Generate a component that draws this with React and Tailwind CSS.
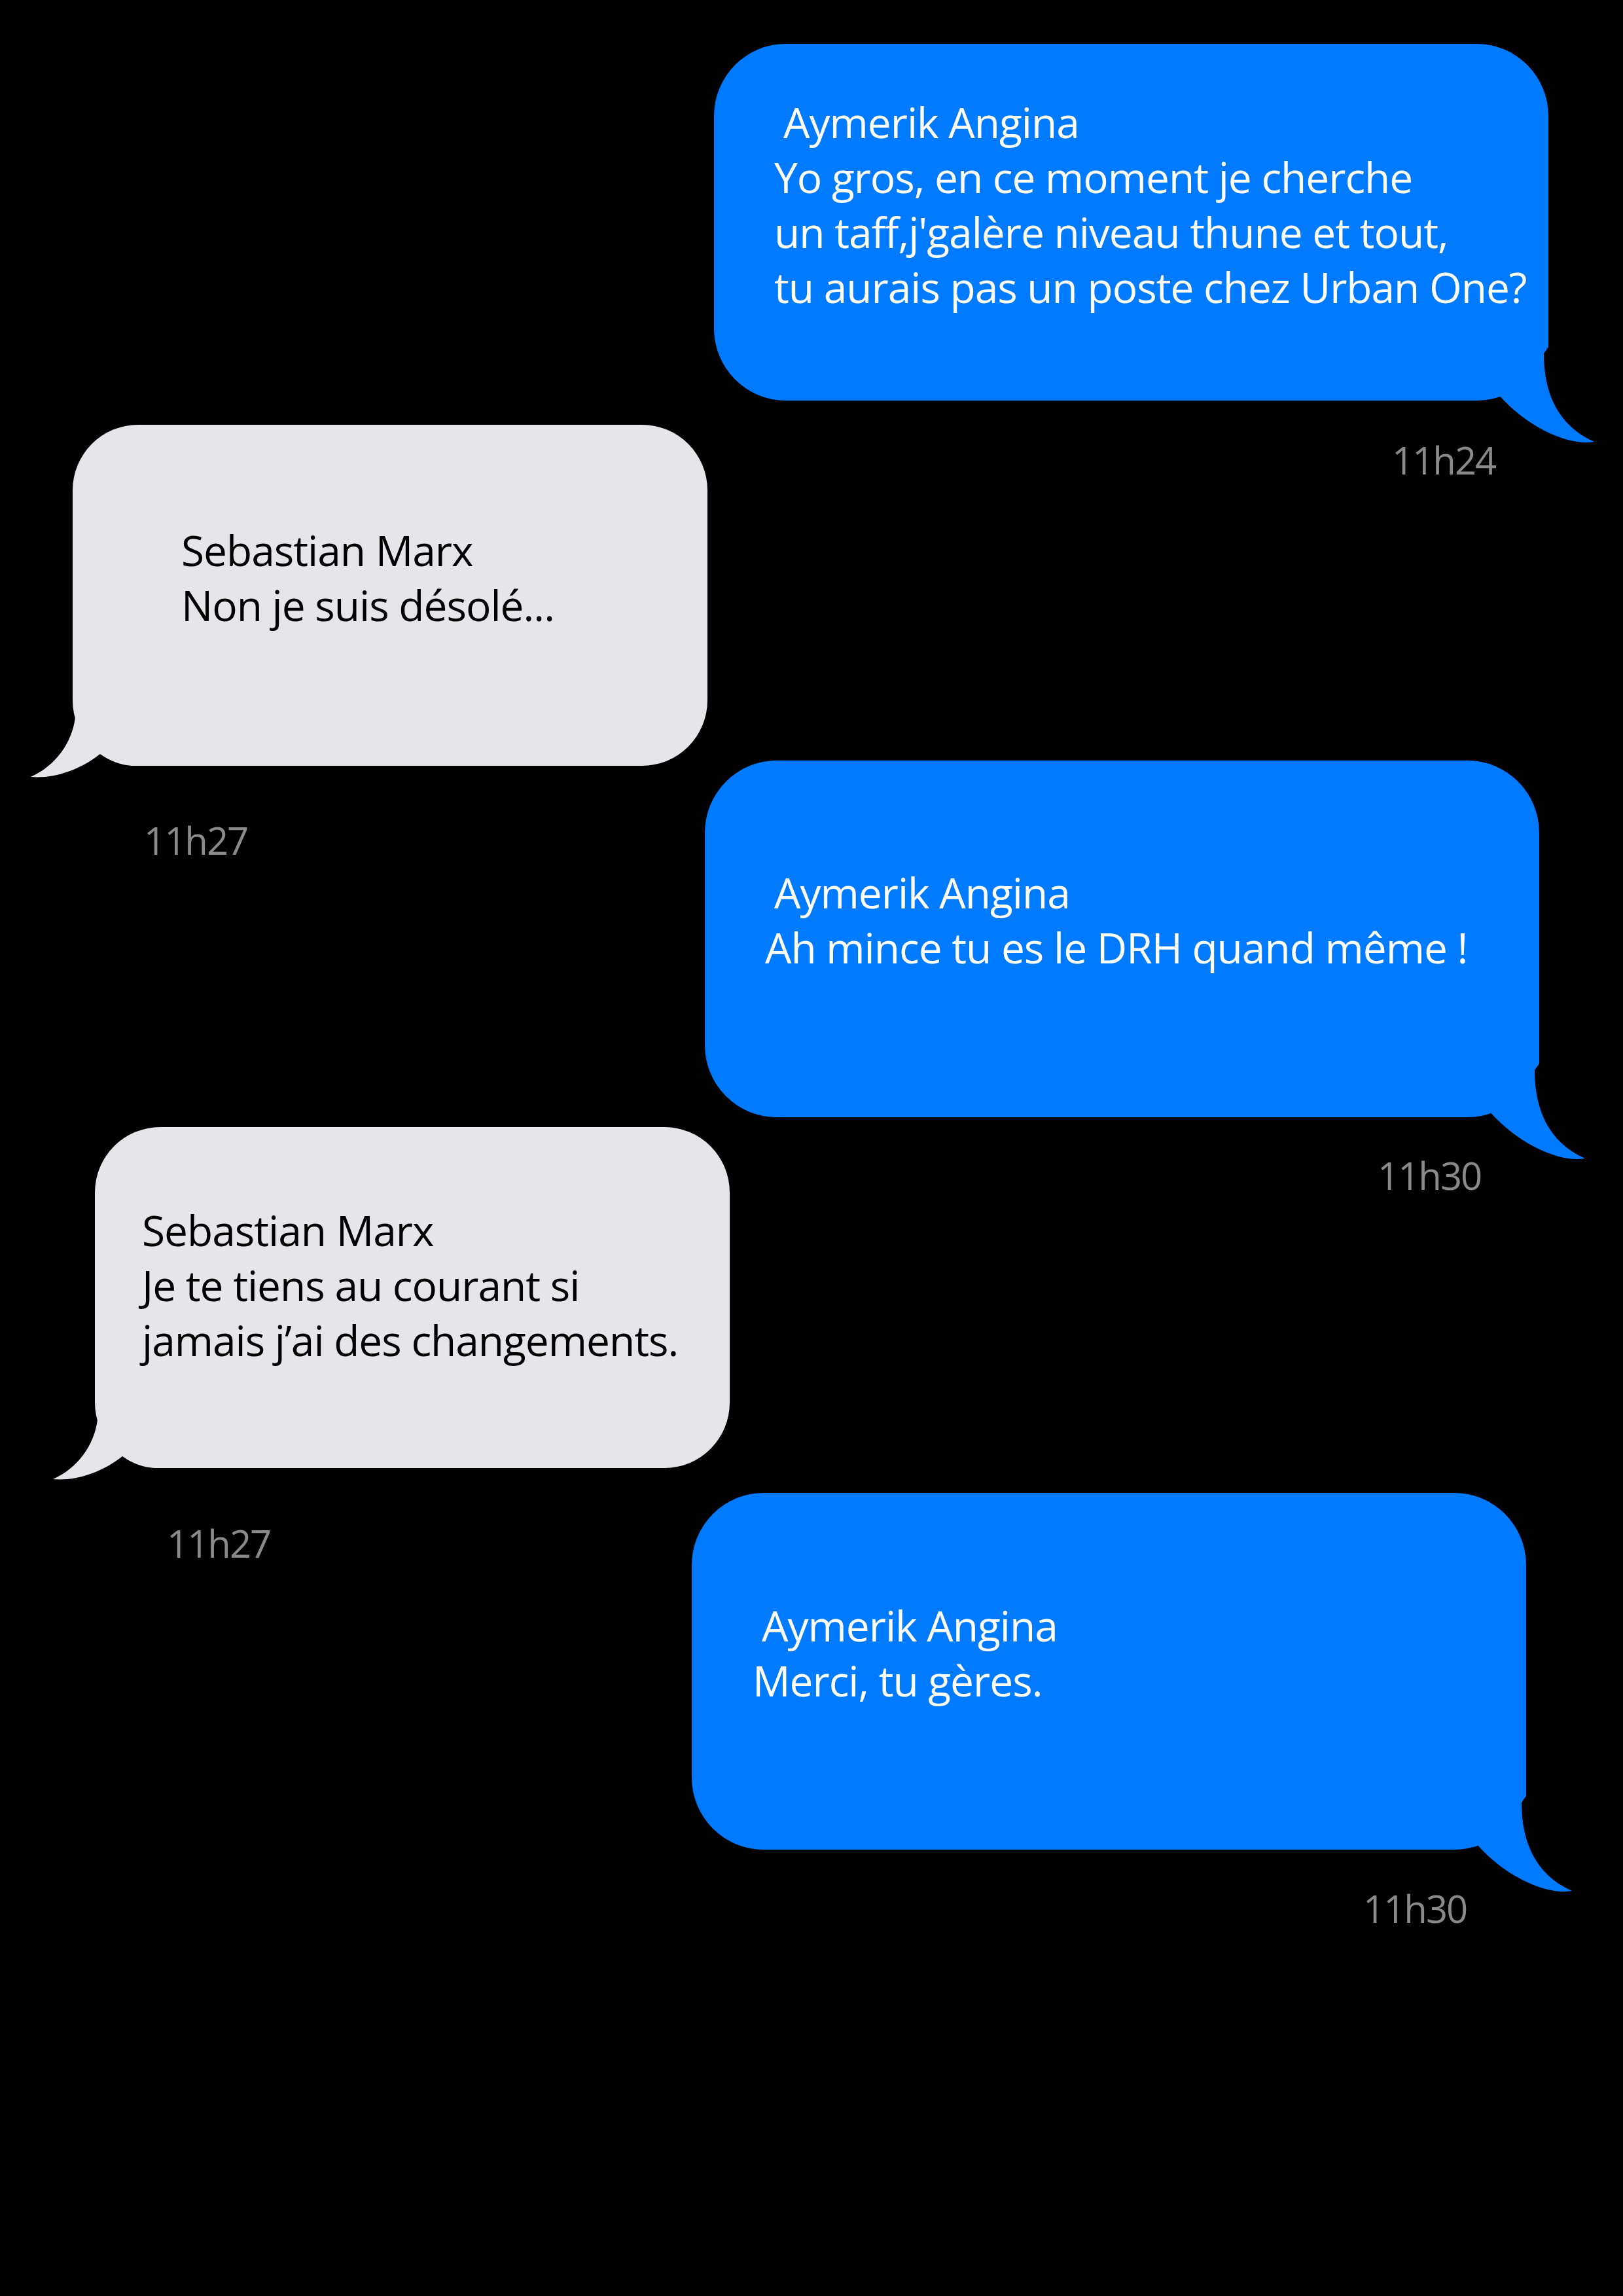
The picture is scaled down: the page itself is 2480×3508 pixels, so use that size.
import React from 'react';

const messages = [
  {
    side: 'right', ml: 'ml-[1091px]', mt: 'mt-[67px]', pt: 'pt-[78px]', pl: 'pl-[92px]',
    name: 'Aymerik Angina',
    lines: ['Yo gros, en ce moment je cherche', "un taff,j'galère niveau thune et tout,", 'tu aurais pas un poste chez Urban One?'],
    time: '11h24', tsMl: 'ml-[1036px]', tsMt: 'mt-[60px]',
  },
  {
    side: 'left', ml: 'ml-[111px]', mt: 'mt-[-85px]', pt: 'pt-[150px]', pl: 'pl-[166px]',
    name: 'Sebastian Marx',
    lines: ['Non je suis désolé...'],
    time: '11h27', tsMl: 'ml-[109px]', tsMt: 'mt-[83px]',
  },
  {
    side: 'right', ml: 'ml-[1077px]', mt: 'mt-[-153px]', pt: 'pt-[160px]', pl: 'pl-[92px]',
    name: 'Aymerik Angina',
    lines: ['Ah mince tu es le DRH quand même !'],
    time: '11h30', tsMl: 'ml-[1028px]', tsMt: 'mt-[58px]',
  },
  {
    side: 'left', ml: 'ml-[145px]', mt: 'mt-[-105px]', pt: 'pt-[116px]', pl: 'pl-[72px]',
    name: 'Sebastian Marx',
    lines: ['Je te tiens au courant si', 'jamais j’ai des changements.'],
    time: '11h27', tsMl: 'ml-[110px]', tsMt: 'mt-[84px]',
  },
  {
    side: 'right', ml: 'ml-[1057px]', mt: 'mt-[-108px]', pt: 'pt-[161px]', pl: 'pl-[93px]',
    name: 'Aymerik Angina',
    lines: ['Merci, tu gères.'],
    time: '11h30', tsMl: 'ml-[1026px]', tsMt: 'mt-[59px]',
  },
];

function BlueTail() {
  return (
    <svg className="absolute left-[1149px] top-[433px] w-[200px] h-[180px]" viewBox="0 0 200 180">
      <path d="M126 0 L126 30 L119 40 C119 100 140 150 196 175 C160 182 95 155 50 103 Q25 112 0 112 L0 0 Z" fill="#007aff" />
    </svg>
  );
}

function GrayTail() {
  return (
    <svg className="absolute left-[-71px] top-[391px] w-[200px] h-[160px]" viewBox="0 0 200 160">
      <path d="M71 0 L75 56 C70 95 45 130 7 147 C40 150 80 138 113 112 Q135 128 162 130 L200 130 L200 0 Z" fill="#e5e5ea" />
    </svg>
  );
}

function Message({ m }) {
  const mine = m.side === 'right';
  return (
    <div className={`${m.ml} ${m.mt}`}>
      <div
        className={
          mine
            ? `relative w-[1275px] h-[545px] rounded-[110px] bg-[#007aff] text-white ${m.pt} ${m.pl}`
            : `relative w-[970px] h-[521px] rounded-[100px] bg-[#e5e5ea] text-black ${m.pt} ${m.pl}`
        }
      >
        {mine ? <BlueTail /> : <GrayTail />}
        <div className="relative text-[64px] leading-[84px] tracking-[-1px] whitespace-nowrap">
          <div className={mine ? 'pl-[14px]' : ''}>{m.name}</div>
          {m.lines.map((l, i) => (
            <div key={i}>{l}</div>
          ))}
        </div>
      </div>
      <div className={`${m.tsMl} ${m.tsMt} text-[58px] leading-[62px] h-[62px] tracking-[-2px] text-[#8a8a8a]`}>
        {m.time}
      </div>
    </div>
  );
}

export default function App() {
  return (
    <div className="w-[2480px] h-[3508px] bg-black overflow-hidden font-['Open_Sans',sans-serif]">
      {messages.map((m, i) => (
        <Message key={i} m={m} />
      ))}
    </div>
  );
}
